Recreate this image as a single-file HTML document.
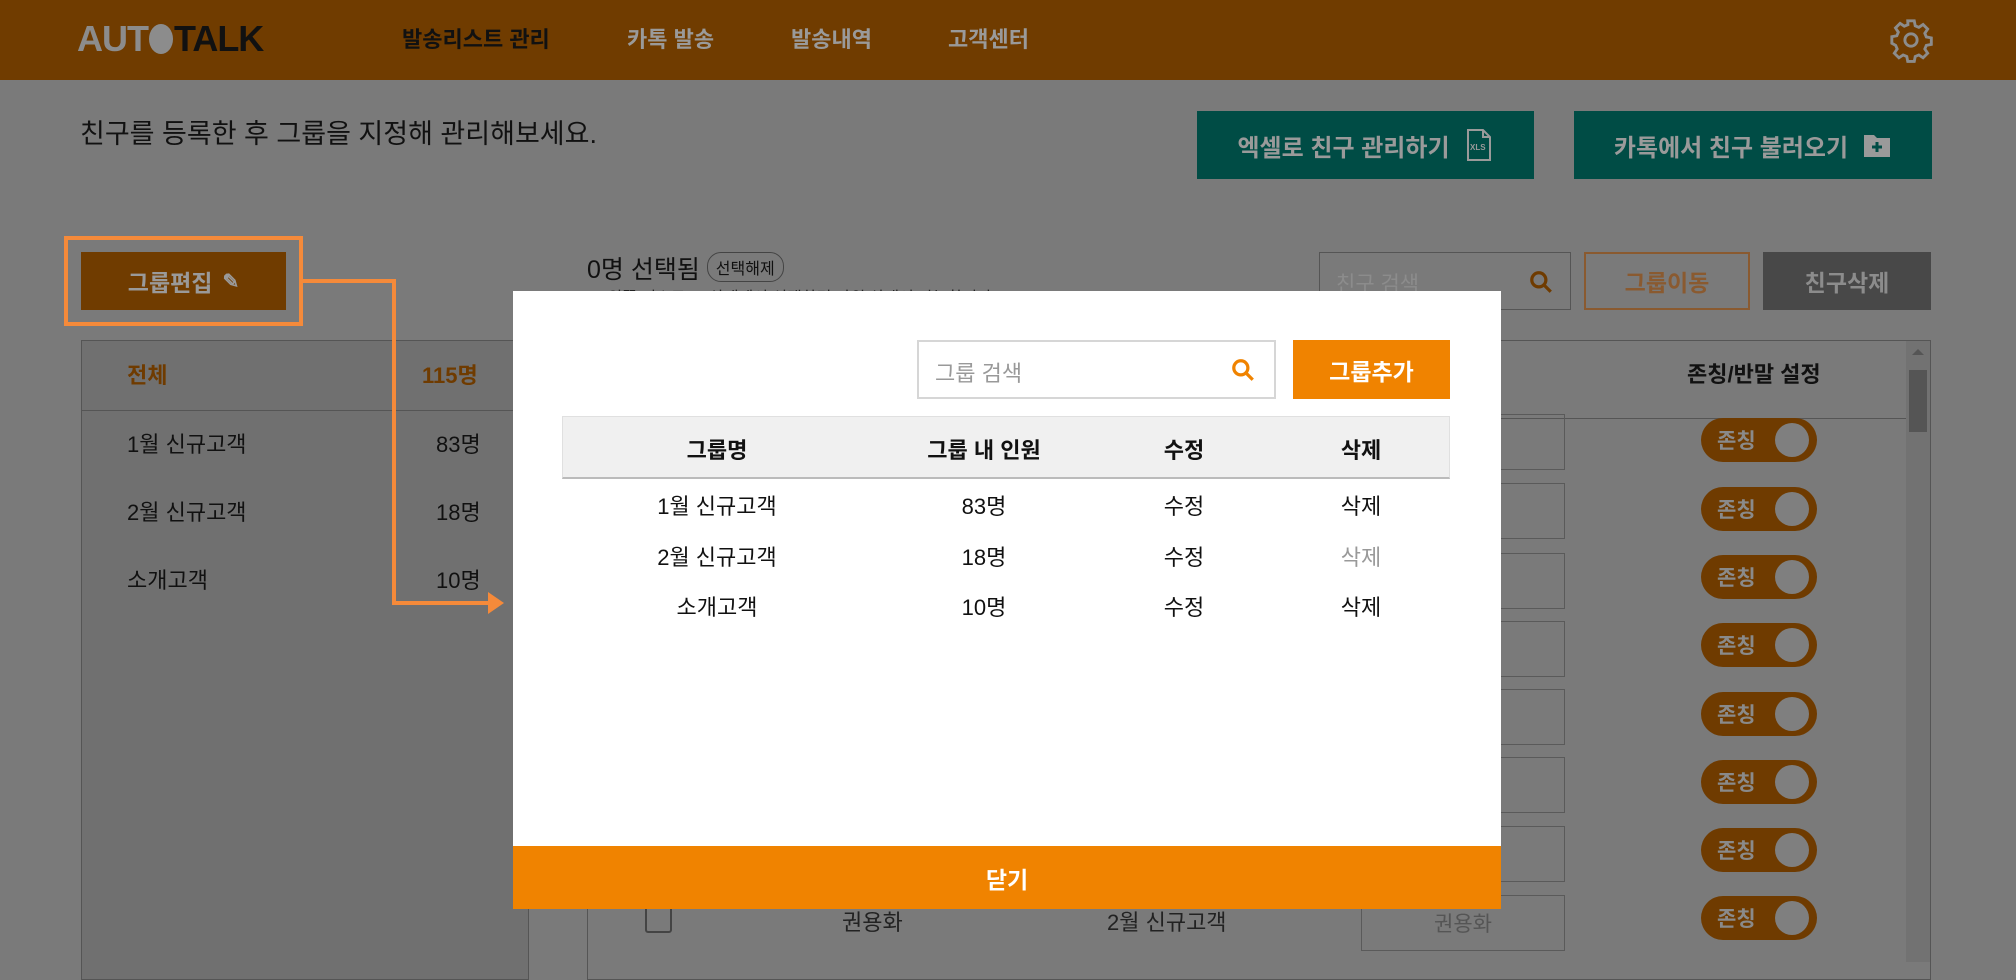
<!DOCTYPE html>
<html><head><meta charset="utf-8"><style>
*{margin:0;padding:0;box-sizing:border-box}
body{width:2016px;height:962px;overflow:hidden;background:#7a7a7a;font-family:"Liberation Sans","Noto Sans CJK KR",sans-serif;position:relative;color:#111}
.a{position:absolute}
.hdr{left:0;top:0;width:2016px;height:80px;background:#703c00}
.nav{top:22px;font-size:22px;font-weight:bold;color:#9a9a9a}
.tb{background:#004c45;color:#9a9a9a;font-size:24px;font-weight:bold;display:flex;align-items:center;justify-content:center;gap:14px}
.c{display:flex;align-items:center;justify-content:center}
.tog{width:116px;height:44px;border-radius:22px;background:#6f3b00;left:1701px}
.tog span{position:absolute;left:16px;top:7px;font-size:21px;font-weight:bold;color:#8a8a8a}
.tog i{position:absolute;right:8px;top:5px;width:34px;height:34px;border-radius:50%;background:#7f7f7f}
.inp{left:1361px;width:204px;height:56px;border:1px solid #5a5a5a}
.lp{font-size:22px}
.mt{font-size:22px;color:#111;text-align:center;width:200px}
.or{background:#f58a3a}
</style></head><body>
<div class="a hdr"></div>
<div class="a" style="left:77px;top:18px;font-size:36px;font-weight:bold;letter-spacing:-1px"><span style="color:#8c8c8c">AUT</span><span style="display:inline-block;width:24px;height:30px;border-radius:50%;background:#8c8c8c;vertical-align:-3px;margin:0 1px"></span><span style="color:#111">TALK</span></div>
<div class="a nav" style="left:402px;color:#111">발송리스트 관리</div>
<div class="a nav" style="left:627px">카톡 발송</div>
<div class="a nav" style="left:791px">발송내역</div>
<div class="a nav" style="left:948px">고객센터</div>
<svg class="a" style="left:1888px;top:17px" width="46" height="46" viewBox="0 0 24 24" fill="none" stroke="#8c8c8c" stroke-width="1.5"><circle cx="12" cy="12" r="3.2"/><path d="M10.3 2h3.4l.5 2.6 1.9.8 2.2-1.5 2.4 2.4-1.5 2.2.8 1.9 2.6.5v3.4l-2.6.5-.8 1.9 1.5 2.2-2.4 2.4-2.2-1.5-1.9.8-.5 2.6h-3.4l-.5-2.6-1.9-.8-2.2 1.5-2.4-2.4 1.5-2.2-.8-1.9L2 13.7v-3.4l2.6-.5.8-1.9-1.5-2.2 2.4-2.4 2.2 1.5 1.9-.8z"/></svg>

<div class="a" style="left:80px;top:112px;font-size:27px">친구를 등록한 후 그룹을 지정해 관리해보세요.</div>
<div class="a tb" style="left:1197px;top:111px;width:337px;height:68px">엑셀로 친구 관리하기 <svg width="30" height="34" viewBox="0 0 30 34" fill="none" stroke="#9a9a9a" stroke-width="2"><path d="M4 2h15l7 7v23H4z"/><path d="M19 2v7h7"/><text x="6" y="22" font-size="8" fill="#9a9a9a" stroke="none" font-family="Liberation Sans">XLS</text></svg></div>
<div class="a tb" style="left:1574px;top:111px;width:358px;height:68px">카톡에서 친구 불러오기 <svg width="30" height="28" viewBox="0 0 30 28"><path d="M2 4h10l3 3h13v19H2z" fill="#9a9a9a"/><path d="M15 11v10M10 16h10" stroke="#004c45" stroke-width="3"/></svg></div>

<div class="a c" style="left:81px;top:252px;width:205px;height:58px;background:#703c00;color:#9a9a9a;font-size:23px;font-weight:bold;gap:10px">그룹편집 <span style="font-size:20px">✎</span></div>

<div class="a" style="left:587px;top:250px;font-size:25px">0명 선택됨 <span style="display:inline-block;font-size:16px;border:1px solid #444;border-radius:14px;padding:2px 8px;vertical-align:4px">선택해제</span></div>
<div class="a" style="left:587px;top:284px;font-size:16px;color:#222;white-space:nowrap;height:8px;overflow:hidden">※ 외쪽 리스트 그 상태에서 선택하면 바위 상태이 가능합니다</div>

<div class="a" style="left:1319px;top:252px;width:252px;height:58px;border:1px solid #555;font-size:21px;color:#8c8c8c;padding:15px 16px">친구 검색
<svg class="a" style="right:16px;top:16px" width="26" height="26" viewBox="0 0 24 24" fill="none" stroke="#6f3b00" stroke-width="3"><circle cx="10" cy="10" r="6.5"/><path d="M15 15l6 6"/></svg></div>
<div class="a c" style="left:1584px;top:252px;width:166px;height:58px;border:2px solid #8a5a30;color:#8a5a30;font-size:23px;font-weight:bold">그룹이동</div>
<div class="a c" style="left:1763px;top:252px;width:168px;height:58px;background:#484848;color:#8c8c8c;font-size:23px;font-weight:bold">친구삭제</div>

<!-- left panel -->
<div class="a" style="left:81px;top:340px;width:448px;height:640px;background:#707070;border:1px solid #555"></div>
<div class="a" style="left:81px;top:410px;width:448px;height:1px;background:#555"></div>
<div class="a lp" style="left:127px;top:358px;color:#6f3b00;font-weight:bold">전체</div>
<div class="a lp" style="left:422px;top:358px;color:#6f3b00;font-weight:bold">115명</div>
<div class="a lp" style="left:127px;top:427px">1월 신규고객</div><div class="a lp" style="left:436px;top:427px">83명</div>
<div class="a lp" style="left:127px;top:495px">2월 신규고객</div><div class="a lp" style="left:436px;top:495px">18명</div>
<div class="a lp" style="left:127px;top:563px">소개고객</div><div class="a lp" style="left:436px;top:563px">10명</div>

<!-- right table -->
<div class="a" style="left:587px;top:340px;width:1344px;height:640px;border:1px solid #555"></div>
<div class="a" style="left:587px;top:418px;width:1319px;height:1px;background:#555"></div>
<div class="a" style="left:1906px;top:341px;width:24px;height:621px;background:#727272"></div>
<div class="a" style="left:1909px;top:370px;width:18px;height:62px;background:#555"></div>
<div class="a" style="left:1912px;top:349px;border-left:6px solid transparent;border-right:6px solid transparent;border-bottom:6px solid #555"></div>
<div class="a" style="left:1687px;top:357px;font-size:22px;font-weight:bold">존칭/반말 설정</div>
<div class="a inp" style="top:414px"></div><div class="a inp" style="top:483px"></div><div class="a inp" style="top:553px"></div>
<div class="a inp" style="top:621px"></div><div class="a inp" style="top:689px"></div><div class="a inp" style="top:757px"></div>
<div class="a inp" style="top:826px"></div><div class="a inp c" style="top:895px;font-size:21px;color:#555">권용화</div>
<div class="a" style="left:1457px;top:567px;font-size:22px;color:#444">님</div>
<div class="a tog" style="top:418px"><span>존칭</span><i></i></div>
<div class="a tog" style="top:487px"><span>존칭</span><i></i></div>
<div class="a tog" style="top:555px"><span>존칭</span><i></i></div>
<div class="a tog" style="top:623px"><span>존칭</span><i></i></div>
<div class="a tog" style="top:692px"><span>존칭</span><i></i></div>
<div class="a tog" style="top:760px"><span>존칭</span><i></i></div>
<div class="a tog" style="top:828px"><span>존칭</span><i></i></div>
<div class="a tog" style="top:896px"><span>존칭</span><i></i></div>
<div class="a" style="left:645px;top:906px;width:27px;height:27px;border:2px solid #444;border-radius:3px"></div>
<div class="a" style="left:842px;top:905px;font-size:22px;color:#222">권용화</div>
<div class="a" style="left:1107px;top:905px;font-size:22px;color:#222">2월 신규고객</div>

<!-- highlight + connector -->
<div class="a" style="left:64px;top:236px;width:239px;height:90px;border:4px solid #f58a3a"></div>
<div class="a or" style="left:303px;top:279px;width:93px;height:4px"></div>
<div class="a or" style="left:392px;top:279px;width:4px;height:326px"></div>
<div class="a or" style="left:392px;top:601px;width:100px;height:4px"></div>
<div class="a" style="left:488px;top:592px;width:0;height:0;border-left:16px solid #f58a3a;border-top:11px solid transparent;border-bottom:11px solid transparent"></div>

<!-- modal -->
<div class="a" style="left:513px;top:291px;width:988px;height:618px;background:#fff"></div>
<div class="a" style="left:917px;top:340px;width:359px;height:59px;border:2px solid #d6d6d6;font-size:22px;color:#999;padding:14px 16px">그룹 검색
<svg class="a" style="right:18px;top:15px" width="26" height="26" viewBox="0 0 24 24" fill="none" stroke="#f08300" stroke-width="3"><circle cx="10" cy="10" r="6.5"/><path d="M15 15l6 6"/></svg></div>
<div class="a c" style="left:1293px;top:340px;width:157px;height:59px;background:#f08300;color:#fff;font-size:23px;font-weight:bold">그룹추가</div>
<div class="a" style="left:562px;top:416px;width:888px;height:63px;background:#f0f0f0;border:1px solid #e0e0e0;border-bottom:2px solid #bbb"></div>
<div class="a mt" style="left:617px;top:433px;font-weight:bold">그룹명</div>
<div class="a mt" style="left:884px;top:433px;font-weight:bold">그룹 내 인원</div>
<div class="a mt" style="left:1084px;top:433px;font-weight:bold">수정</div>
<div class="a mt" style="left:1261px;top:433px;font-weight:bold">삭제</div>
<div class="a mt" style="left:617px;top:489px">1월 신규고객</div><div class="a mt" style="left:884px;top:489px">83명</div><div class="a mt" style="left:1084px;top:489px">수정</div><div class="a mt" style="left:1261px;top:489px">삭제</div>
<div class="a mt" style="left:617px;top:540px">2월 신규고객</div><div class="a mt" style="left:884px;top:540px">18명</div><div class="a mt" style="left:1084px;top:540px">수정</div><div class="a mt" style="left:1261px;top:540px;color:#999">삭제</div>
<div class="a mt" style="left:617px;top:590px">소개고객</div><div class="a mt" style="left:884px;top:590px">10명</div><div class="a mt" style="left:1084px;top:590px">수정</div><div class="a mt" style="left:1261px;top:590px">삭제</div>
<div class="a c" style="left:513px;top:846px;width:988px;height:63px;background:#f08300;color:#fff;font-size:23px;font-weight:bold">닫기</div>
</body></html>
